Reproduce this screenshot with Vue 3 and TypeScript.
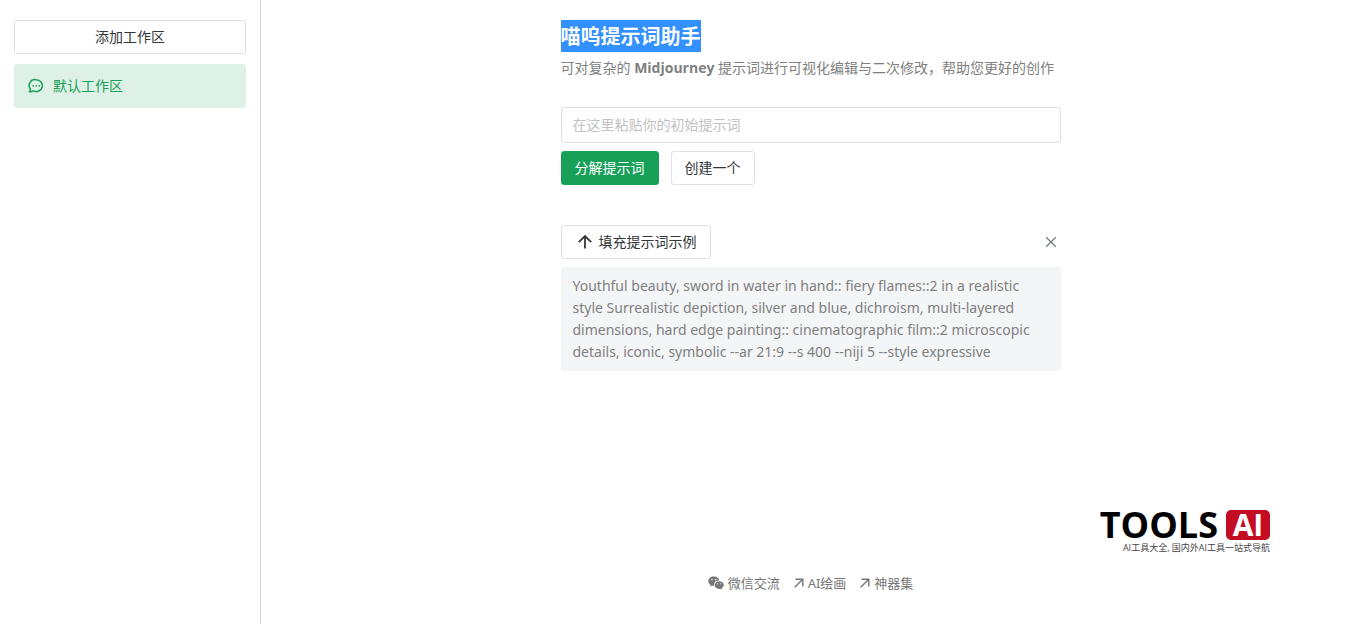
<script setup lang="ts">
import { ref } from 'vue'

const workspaces = ref<string[]>(['默认工作区'])
const active = ref(0)
const prompt = ref('')
const showExample = ref(true)
const example =
  'Youthful beauty, sword in water in hand:: fiery flames::2 in a realistic style Surrealistic depiction, silver and blue, dichroism, multi-layered dimensions, hard edge painting:: cinematographic film::2 microscopic details, iconic, symbolic --ar 21:9 --s 400 --niji 5 --style expressive'

function addWorkspace() {
  workspaces.value.push(`工作区 ${workspaces.value.length + 1}`)
}
</script>

<template>
  <div class="layout">
    <aside class="sidebar">
      <button class="btn add" type="button" @click="addWorkspace">添加工作区</button>
      <nav class="spaces">
        <button
          v-for="(name, i) in workspaces"
          :key="name"
          type="button"
          class="space"
          :class="{ active: i === active }"
          @click="active = i"
        >
          <svg class="icon-chat" viewBox="0 0 16 16" aria-hidden="true">
            <path d="M8.200 1.700a6.300 5.900 0 1 1-2.900 11.200c-1.100.8-2.400 1-3.900.9.8-.8 1.100-1.700.9-2.800A6 5.900 0 0 1 8.200 1.700Z" fill="none" stroke="currentColor" stroke-width="1.500" stroke-linejoin="round" />
            <circle cx="5.200" cy="7.800" r="0.900" fill="currentColor" />
            <circle cx="8.200" cy="7.800" r="0.900" fill="currentColor" />
            <circle cx="11.200" cy="7.800" r="0.900" fill="currentColor" />
          </svg>
          <span>{{ name }}</span>
        </button>
      </nav>
    </aside>

    <main class="main">
      <div class="content">
        <header>
          <h1><span class="selected">喵呜提示词助手</span></h1>
          <p class="intro">可对复杂的 <strong>Midjourney</strong> 提示词进行可视化编辑与二次修改，帮助您更好的创作</p>
        </header>

        <form class="prompt-form" @submit.prevent>
          <input v-model="prompt" class="prompt" type="text" aria-label="初始提示词" placeholder="在这里粘贴你的初始提示词" />
          <div class="actions">
            <button class="btn primary" type="submit">分解提示词</button>
            <button class="btn" type="button">创建一个</button>
          </div>
        </form>

        <section v-if="showExample" class="example">
          <div class="example-head">
            <button class="btn fill" type="button" @click="prompt = example">
              <svg class="icon-up" viewBox="0 0 16 16" aria-hidden="true">
                <path d="M8 14.500V2M1.800 8.200 8 2l6.200 6.200" fill="none" stroke="currentColor" stroke-width="1.800" />
              </svg>
              <span>填充提示词示例</span>
            </button>
            <button class="close" type="button" aria-label="关闭" @click="showExample = false">
              <svg viewBox="0 0 12 12" aria-hidden="true">
                <path d="M1.200 1.200l9.600 9.600M10.800 1.200l-9.600 9.600" fill="none" stroke="currentColor" stroke-width="1.300" />
              </svg>
            </button>
          </div>
          <p class="example-text">{{ example }}</p>
        </section>
      </div>

      <footer class="footer">
        <a href="#wechat">
          <svg class="icon-wechat" viewBox="0 0 16 14" aria-hidden="true">
            <path fill="currentColor" fill-rule="evenodd" d="M5.800.6C2.700.6.3 2.600.3 5.200c0 1.500.8 2.700 2.100 3.600L1.900 10.500l2-1c.7.2 1.300.3 1.900.3h.4C5.500 7 7.700 4.600 11 4.600h.3C10.800 2.200 8.500.6 5.800.6ZM4 3a.75.75 0 1 1 0 1.500A.75.75 0 0 1 4 3Zm3.700 0a.75.75 0 1 1 0 1.500.75.75 0 0 1 0-1.500Z" />
            <path fill="currentColor" fill-rule="evenodd" d="M11.200 5.200c-2.600 0-4.600 1.800-4.600 3.900s2 3.900 4.600 3.900c.5 0 1-.1 1.500-.3l1.600.9-.4-1.500c1.100-.8 1.900-1.800 1.900-3 0-2.200-2.100-3.900-4.600-3.900ZM9.700 7.200a.6.6 0 1 1 0 1.200.6.6 0 0 1 0-1.200Zm3 0a.6.6 0 1 1 0 1.200.6.6 0 0 1 0-1.200Z" />
          </svg>
          微信交流
        </a>
        <a href="#painting">
          <svg class="icon-out" viewBox="0 0 10 10" aria-hidden="true">
            <path d="M1.500 1.200h7.300v7.300M8.800 1.200.7 9.300" fill="none" stroke="currentColor" stroke-width="1.400" />
          </svg>
          AI绘画
        </a>
        <a href="#tools">
          <svg class="icon-out" viewBox="0 0 10 10" aria-hidden="true">
            <path d="M1.500 1.200h7.300v7.300M8.800 1.200.7 9.300" fill="none" stroke="currentColor" stroke-width="1.400" />
          </svg>
          神器集
        </a>
      </footer>

      <div class="watermark">
        <div class="brand"><span>TOOLS</span><span class="badge">AI</span></div>
        <div class="tagline">AI工具大全, 国内外AI工具一站式导航</div>
      </div>
    </main>
  </div>
</template>

<style>
body {
  margin: 0;
  background: #fff;
}
</style>

<style scoped>
.layout {
  display: flex;
  min-height: 100vh;
  font-family: 'Noto Sans', 'Noto Sans CJK SC', sans-serif;
  font-size: 14px;
  line-height: 22px;
  color: #333639;
}
*,
*::before {
  box-sizing: border-box;
}
button,
input {
  font: inherit;
}
button {
  cursor: pointer;
}
svg {
  display: block;
  flex: none;
}
.sidebar {
  flex: none;
  width: 261px;
  padding: 20px 14px;
  border-right: 1px solid #d3d3d6;
}
.btn {
  display: inline-flex;
  align-items: center;
  justify-content: center;
  height: 34px;
  padding: 0 13px;
  border: 1px solid #e0e0e6;
  border-radius: 3px;
  background: #fff;
  color: #333639;
}
.add {
  width: 100%;
}
.spaces {
  display: grid;
  gap: 10px;
  margin-top: 10px;
}
.space {
  display: flex;
  align-items: center;
  gap: 9px;
  height: 44px;
  padding: 0 14px;
  border: 0;
  border-radius: 3px;
  background: #f4f5f7;
  color: #333639;
}
.space.active {
  background: #ddf1e6;
  color: #18a058;
}
.icon-chat {
  width: 16px;
  height: 16px;
}
.main {
  position: relative;
  flex: 1;
  display: flex;
  flex-direction: column;
  align-items: center;
  justify-content: space-between;
  padding: 20px 24px 30px;
}
.content {
  width: 100%;
  max-width: 500px;
}
h1 {
  display: flex;
  margin: 0;
  font-size: 20px;
  line-height: 30px;
  font-weight: 700;
}
.selected {
  padding-top: 2px;
  background: #3390ff;
  color: #fff;
}
.intro {
  margin: 5px 0 0;
  color: #808080;
  font-family: 'Open Sans', 'Noto Sans CJK SC', sans-serif;
  white-space: nowrap;
}
.prompt-form {
  margin-top: 28px;
}
.prompt {
  display: block;
  width: 100%;
  height: 36px;
  padding: 5px 11px 7px;
  border: 1px solid #e0e0e6;
  border-radius: 3px;
  outline: none;
  color: #333639;
}
.prompt::placeholder {
  color: #c2c2c2;
  opacity: 1;
}
.actions {
  display: flex;
  gap: 12px;
  margin-top: 8px;
}
.primary {
  border-color: #18a058;
  background: #18a058;
  color: #fff;
}
.example {
  margin-top: 40px;
}
.example-head {
  display: flex;
  align-items: center;
  justify-content: space-between;
}
.fill {
  gap: 6px;
  padding: 0 13px 0 15px;
}
.icon-up {
  width: 16px;
  height: 16px;
}
.close {
  padding: 4px;
  border: 0;
  background: none;
  color: #767c82;
}
.close svg {
  width: 12px;
  height: 12px;
}
.example-text {
  margin: 8px 0 0;
  padding: 8px 12px;
  border-radius: 3px;
  background: #f4f5f7;
  color: #808080;
}
.footer {
  display: flex;
  gap: 14px;
  font-size: 13px;
}
.footer a {
  display: flex;
  align-items: center;
  gap: 4px;
  color: #767676;
  text-decoration: none;
}
.icon-wechat {
  width: 16px;
  height: 14px;
}
.icon-out {
  width: 10px;
  height: 10px;
}
.watermark {
  position: absolute;
  right: 90px;
  bottom: 69px;
  color: #000;
  font-family: 'Open Sans', 'Noto Sans CJK SC', sans-serif;
}
.brand {
  display: flex;
  align-items: center;
  justify-content: flex-end;
  gap: 8px;
  font-size: 36px;
  line-height: 30px;
  font-weight: 700;
}
.badge {
  width: 44px;
  border-radius: 5px;
  background: #c40d23;
  color: #fff;
  font-size: 30px;
  text-align: center;
}
.tagline {
  padding-top: 1px;
  font-size: 9px;
  line-height: 14px;
  text-align: right;
  color: #444;
}
</style>
